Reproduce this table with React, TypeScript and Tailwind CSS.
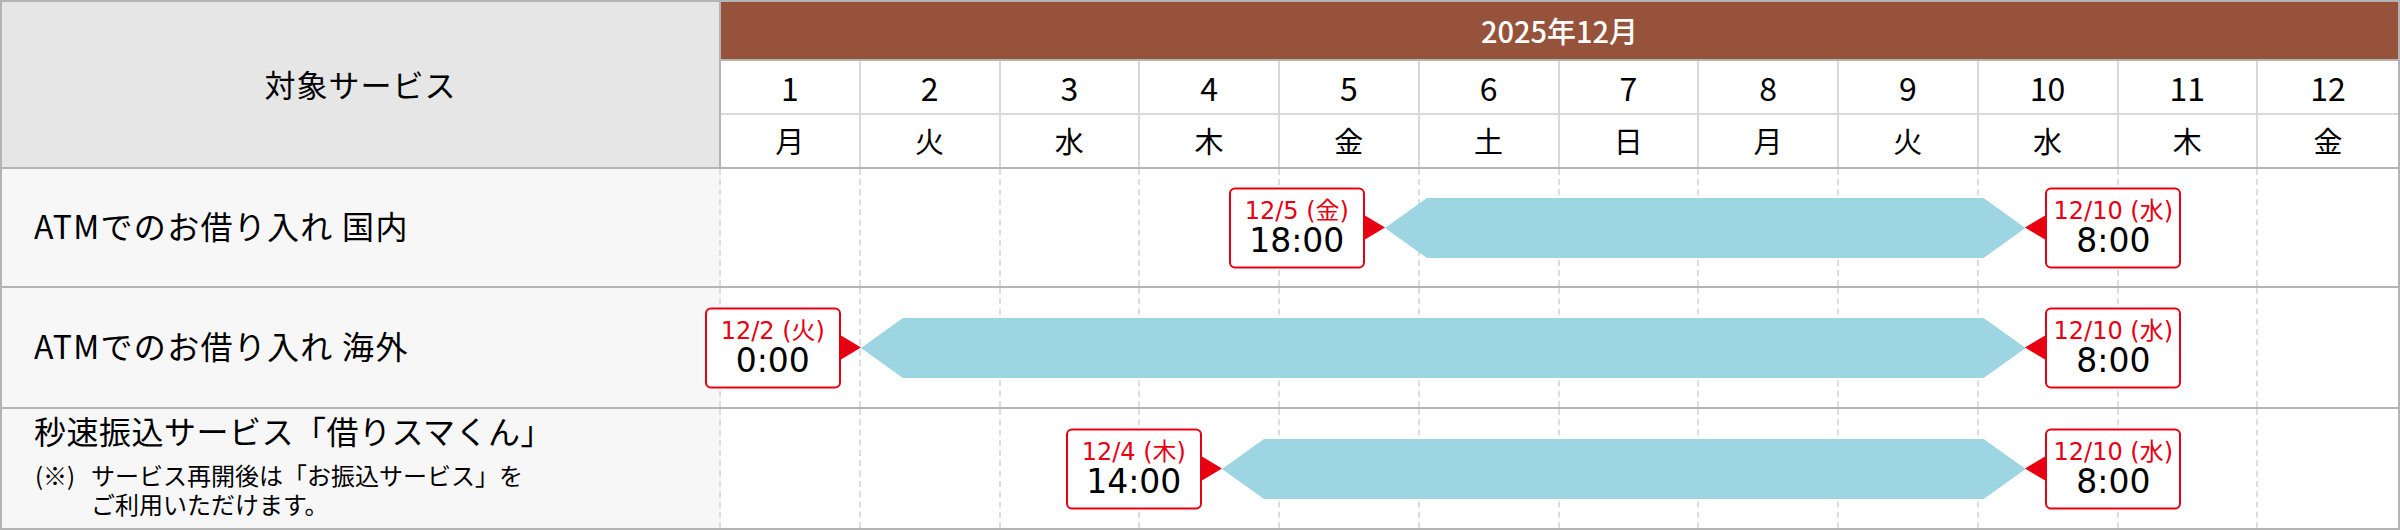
const DAYS = [
  { d: 1, w: "月" },
  { d: 2, w: "火" },
  { d: 3, w: "水" },
  { d: 4, w: "木" },
  { d: 5, w: "金" },
  { d: 6, w: "土" },
  { d: 7, w: "日" },
  { d: 8, w: "月" },
  { d: 9, w: "火" },
  { d: 10, w: "水" },
  { d: 11, w: "木" },
  { d: 12, w: "金" },
];

const CAL_W = 1677;
const COL_W = CAL_W / 12;

interface Point {
  day: number;
  hour: number;
  date: string;
  time: string;
}

interface Row {
  id: string;
  start: Point;
  end: Point;
}

const ROWS: Row[] = [
  {
    id: "domestic",
    start: { day: 5, hour: 18, date: "12/5 (金)", time: "18:00" },
    end: { day: 10, hour: 8, date: "12/10 (水)", time: "8:00" },
  },
  {
    id: "overseas",
    start: { day: 2, hour: 0, date: "12/2 (火)", time: "0:00" },
    end: { day: 10, hour: 8, date: "12/10 (水)", time: "8:00" },
  },
  {
    id: "karisuma",
    start: { day: 4, hour: 14, date: "12/4 (木)", time: "14:00" },
    end: { day: 10, hour: 8, date: "12/10 (水)", time: "8:00" },
  },
];

const posOf = (p: Point) => (p.day - 1 + p.hour / 24) * COL_W;

const Label = ({ p }: { p: Point }) => (
  <div className="w-[136px] h-[81px] bg-white border-2 border-[#e60012] rounded-[6px] flex flex-col items-center pt-[8px] font-['DejaVu_Sans','Noto_Sans_CJK_JP',sans-serif]">
    <div className="text-[24px] leading-[26px] text-[#e60012]">{p.date}</div>
    <div className="text-[33px] leading-[34px] text-black">{p.time}</div>
  </div>
);

const Timeline = ({ row }: { row: Row }) => {
  const x1 = posOf(row.start);
  const x2 = posOf(row.end);
  const w = x2 - x1;
  return (
    <div className="relative flex-1 h-full">
      <div className="grid grid-cols-12 h-full">
        {DAYS.map((d, i) => (
          <div
            key={d.d}
            className={i < 11 ? "border-r-2 border-dashed border-[#dddddd]" : ""}
          />
        ))}
      </div>
      <svg
        className="absolute top-1/2 -translate-y-1/2"
        style={{ left: x1, width: w }}
        height={60}
        viewBox={`0 0 ${w} 60`}
      >
        <polygon
          points={`0,30 42,0 ${w - 42},0 ${w},30 ${w - 42},60 42,60`}
          fill="#9dd5e3"
        />
      </svg>
      <div className="absolute top-1/2 -translate-y-1/2 flex items-center" style={{ left: x1 - 156 }}>
        <Label p={row.start} />
        <svg width={20} height={24} viewBox="0 0 20 24">
          <polygon points="0,0 20,12 0,24" fill="#e60012" />
        </svg>
      </div>
      <div className="absolute top-1/2 -translate-y-1/2 flex items-center" style={{ left: x2 }}>
        <svg width={20} height={24} viewBox="0 0 20 24">
          <polygon points="20,0 0,12 20,24" fill="#e60012" />
        </svg>
        <Label p={row.end} />
      </div>
    </div>
  );
};

export default function App() {
  return (
    <div className="w-[2400px] h-[530px] bg-white font-['Noto_Sans_CJK_JP',sans-serif] text-black">
      <div className="border-2 border-[#b4b4b4]">
        {/* header */}
        <div className="flex border-b-2 border-[#b4b4b4]">
          <div className="w-[719px] h-[165px] bg-[#e6e6e6] border-r-2 border-[#b4b4b4] flex items-center justify-center text-[31px] tracking-[1px]">
            対象サービス
          </div>
          <div className="flex-1">
            <div className="h-[59px] bg-[#96523a] border-b-2 border-[#b4b4b4] flex items-center justify-center text-white text-[29px] font-medium">
              2025年12月
            </div>
            <div className="grid grid-cols-12 h-[54px] border-b-2 border-[#d9d9d9]">
              {DAYS.map((d, i) => (
                <div
                  key={d.d}
                  className={`flex items-center justify-center text-[32px] ${i < 11 ? "border-r-2 border-[#d9d9d9]" : ""}`}
                >
                  {d.d}
                </div>
              ))}
            </div>
            <div className="grid grid-cols-12 h-[52px]">
              {DAYS.map((d, i) => (
                <div
                  key={d.d}
                  className={`flex items-center justify-center text-[29px] ${i < 11 ? "border-r-2 border-[#d9d9d9]" : ""}`}
                >
                  {d.w}
                </div>
              ))}
            </div>
          </div>
        </div>

        {/* rows */}
        <div className="flex h-[119px] border-b-2 border-[#b4b4b4]">
          <div className="w-[719px] bg-[#f7f7f7] border-r-2 border-dashed border-[#dddddd] flex items-center pl-[32px] pb-[5px] text-[32px] tracking-[1.3px]">
            ATMでのお借り入れ 国内
          </div>
          <Timeline row={ROWS[0]} />
        </div>
        <div className="flex h-[121px] border-b-2 border-[#b4b4b4]">
          <div className="w-[719px] bg-[#f7f7f7] border-r-2 border-dashed border-[#dddddd] flex items-center pl-[32px] pb-[5px] text-[32px] tracking-[1.3px]">
            ATMでのお借り入れ 海外
          </div>
          <Timeline row={ROWS[1]} />
        </div>
        <div className="flex h-[119px]">
          <div className="w-[719px] bg-[#f7f7f7] border-r-2 border-dashed border-[#dddddd] pl-[32px] pt-[2px]">
            <div className="text-[32px] leading-[38px] tracking-[0.5px]">秒速振込サービス「借りスマくん」</div>
            <div className="flex mt-[11px] text-[24px] leading-[29px] pl-[1px]">
              <span className="w-[56px] shrink-0">(※)</span>
              <span>
                サービス再開後は「お振込サービス」を
                <br />
                ご利用いただけます。
              </span>
            </div>
          </div>
          <Timeline row={ROWS[2]} />
        </div>
      </div>
    </div>
  );
}
